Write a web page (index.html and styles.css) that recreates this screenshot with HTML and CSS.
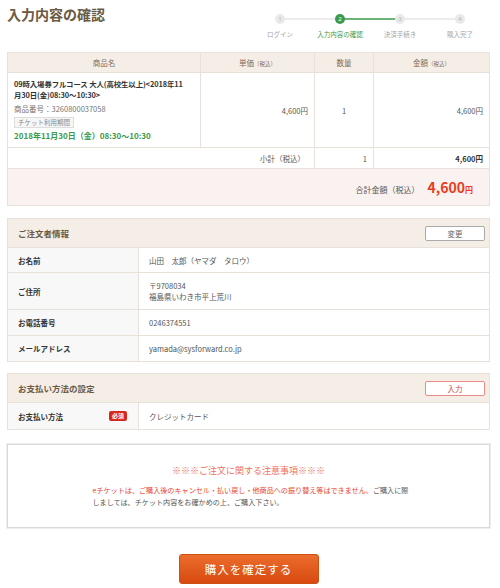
FILE: index.html
```html
<!DOCTYPE html>
<html lang="ja">
<head>
<meta charset="utf-8">
<title>入力内容の確認</title>
<link rel="stylesheet" href="styles.css">
</head>
<body>
<div class="page">

  <div class="head">
    <h1>入力内容の確認</h1>
    <div class="steps">
      <svg class="steps-bar" width="240" height="12" viewBox="0 0 240 12">
        <line x1="30" y1="6" x2="90" y2="6" stroke="#e6e6e6" stroke-width="1.5"/>
        <line x1="90" y1="6" x2="150" y2="6" stroke="#3b9a4c" stroke-width="1.5"/>
        <line x1="150" y1="6" x2="210" y2="6" stroke="#e6e6e6" stroke-width="1.5"/>
        <circle cx="30" cy="6" r="5" fill="#e9e9e9"/>
        <circle cx="90" cy="6" r="5" fill="#3b9a4c"/>
        <circle cx="150" cy="6" r="5" fill="#e9e9e9"/>
        <circle cx="210" cy="6" r="5" fill="#e9e9e9"/>
        <text x="30" y="8.2" fill="#b5b5b5">1</text>
        <text x="90" y="8.2" fill="#fff">2</text>
        <text x="150" y="8.2" fill="#b5b5b5">3</text>
        <text x="210" y="8.2" fill="#b5b5b5">4</text>
      </svg>
      <div class="steps-labels">
        <span>ログイン</span>
        <span class="on">入力内容の確認</span>
        <span>決済手続き</span>
        <span>購入完了</span>
      </div>
    </div>
  </div>

  <table class="cart">
    <colgroup>
      <col class="c-name"><col class="c-price"><col class="c-qty"><col>
    </colgroup>
    <tr class="cart-head">
      <th>商品名</th>
      <th>単価<small>（税込）</small></th>
      <th>数量</th>
      <th>金額<small>（税込）</small></th>
    </tr>
    <tr class="cart-item">
      <td class="item">
        <div class="item-name">09時入場券フルコース 大人(高校生以上)&lt;2018年11<br>月30日(金)08:30〜10:30&gt;</div>
        <div class="item-code">商品番号：3260800037058</div>
        <span class="item-tag">チケット利用期間</span>
        <div class="item-date">2018年11月30日（金）08:30〜10:30</div>
      </td>
      <td class="num">4,600円</td>
      <td class="mid">1</td>
      <td class="num">4,600円</td>
    </tr>
    <tr class="cart-sub">
      <td colspan="2" class="num sub-label">小計（税込）</td>
      <td class="num">1</td>
      <td class="num strong">4,600円</td>
    </tr>
    <tr class="cart-total">
      <td colspan="4">
        合計金額（税込）<span class="total">4,600<small>円</small></span>
      </td>
    </tr>
  </table>

  <div class="box">
    <div class="box-head">
      <span>ご注文者情報</span>
      <button class="btn-small">変更</button>
    </div>
    <table class="info">
      <tr class="r-name"><th>お名前</th><td>山田　太郎（ヤマダ　タロウ）</td></tr>
      <tr class="r-addr"><th>ご住所</th><td>〒9708034<br>福島県いわき市平上荒川</td></tr>
      <tr class="r-tel"><th>お電話番号</th><td>0246374551</td></tr>
      <tr class="r-mail"><th>メールアドレス</th><td>yamada@sysforward.co.jp</td></tr>
    </table>
  </div>

  <div class="box pay">
    <div class="box-head">
      <span>お支払い方法の設定</span>
      <button class="btn-small red">入力</button>
    </div>
    <table class="info">
      <tr class="r-pay">
        <th><div class="req-row">お支払い方法<span class="req">必須</span></div></th>
        <td>クレジットカード</td>
      </tr>
    </table>
  </div>

  <div class="notice">
    <p class="notice-title">※※※ご注文に関する注意事項※※※</p>
    <p class="notice-text"><span class="warn">eチケットは、ご購入後のキャンセル・払い戻し・他商品への振り替え等はできません。</span>ご購入に際<br>しましては、チケット内容をお確かめの上、ご購入下さい。</p>
  </div>

  <div class="submit">
    <button class="btn-buy">購入を確定する</button>
  </div>

</div>
</body>
</html>
```

FILE: styles.css
```css
body {margin:0; background:#fff; font-family:"Noto Sans CJK JP", "Noto Sans", sans-serif; color:#555;}
.page {width:483px; padding:0 10px 0 7px;}

.head {display:flex; justify-content:space-between; height:52px;}
h1 {margin:0; padding-top:6px; font-size:14px; line-height:16px; color:#6b5a44; font-weight:bold;}
.steps {margin-top:13px; width:240px;}
.steps-bar {display:block;}
.steps-bar text {font-size:6px; text-anchor:middle; font-family:"Noto Sans", sans-serif;}
.steps-labels {display:flex; margin-top:5px;}
.steps-labels span {width:60px; text-align:center; font-size:6.5px; line-height:9px; color:#a5a5a5;}
.steps-labels .on {color:#3b9a4c;}

table {border-collapse:collapse; width:100%;}
.cart {table-layout:fixed; border:1px solid #e8e1da; font-size:7.5px;}
.cart td, .cart th {border:1px solid #e8e1da; padding:0 6px;}
.cart-head th {background:#f5eee6; height:19px; font-weight:normal; color:#7d6d5d; font-size:7.5px;}
.cart-head small {font-size:5.5px;}
.c-name {width:193px;}
.c-price {width:114px;}
.c-qty {width:59px;}
.cart-item td {height:62px; padding-top:6px; padding-bottom:6px; color:#555;}
.item {vertical-align:top;}
.item-name {font-weight:bold; font-size:7.4px; line-height:10.5px; color:#333; white-space:nowrap; letter-spacing:-0.1px;}
.item-code {margin-top:4px; color:#777; line-height:10px;}
.item-tag {display:inline-block; margin-top:3px; padding:0 3px; border:1px solid #ddd; background:#f6f6f6; color:#888; font-size:6.5px; line-height:9px;}
.item-date {margin-top:3px; font-weight:bold; font-size:8px; line-height:10px; color:#3b9a4c;}
.num {text-align:right;}
.mid {text-align:center;}
.cart-sub td {height:20px;}
.sub-label {padding-right:9px !important;}
.strong {font-weight:bold; color:#333;}
.cart-total td {height:36px; background:#faf2f0; text-align:right; padding-right:16px; font-size:8px; color:#555;}
.total {margin-left:8px; font-size:14px; font-weight:bold; color:#ea3d1f;}
.total small {font-size:8px;}

.box {margin-top:12px; border:1px solid #e8e1da;}
.box.pay {margin-top:11px;}
.box-head {display:flex; justify-content:space-between; align-items:center; height:28px; padding:0 4px 0 10px; background:#f5eee6; border-bottom:1px solid #e8e1da; font-size:8.5px; font-weight:bold; color:#6b5a44;}
.btn-small {width:60px; height:15px; padding:0; border:1px solid #aaa; border-radius:2px; background:#fff; font-family:inherit; font-size:7.5px; color:#666;}
.btn-small.red {border-color:#ec8c84; color:#e2453a;}
.info th, .info td {border-top:1px solid #e8e1da; font-size:7.5px; line-height:11px; text-align:left;}
.info tr:first-child th, .info tr:first-child td {border-top:0;}
.info th {width:120px; padding:0 0 0 10px; background:#f8f8f8; color:#333; font-weight:bold; border-right:1px solid #e8e1da;}
.info td {padding:0 10px; color:#555;}
.r-name th {height:24px;}
.r-addr th {height:36px;}
.r-tel th, .r-mail th {height:25px;}
.r-pay th {height:26px;}
.req-row {display:flex; justify-content:space-between; align-items:center; padding-right:11px;}
.req {background:#d9261c; color:#fff; font-size:6px; line-height:10px; padding:0 3px; border-radius:2px;}

.notice {margin-top:14px; height:82px; border:1px solid #d9d9d9; box-shadow:0 0 0 1px #eee; display:flex; flex-direction:column; align-items:center; justify-content:center;}
.notice p {margin:0;}
.notice-title {font-size:9px; line-height:12px; color:#f0705e; margin-bottom:7px !important;}
.notice-text {width:312px; font-size:7.1px; line-height:12px; color:#555; white-space:nowrap;}
.warn {color:#e8452e;}

.submit {display:flex; justify-content:center; margin-top:26px;}
.btn-buy {width:140px; height:30px; border:1px solid #c9500f; border-radius:3px; background:linear-gradient(#eb6d2c, #d84a10); color:#fff; font-family:inherit; font-size:11.5px; letter-spacing:1px;}
```
